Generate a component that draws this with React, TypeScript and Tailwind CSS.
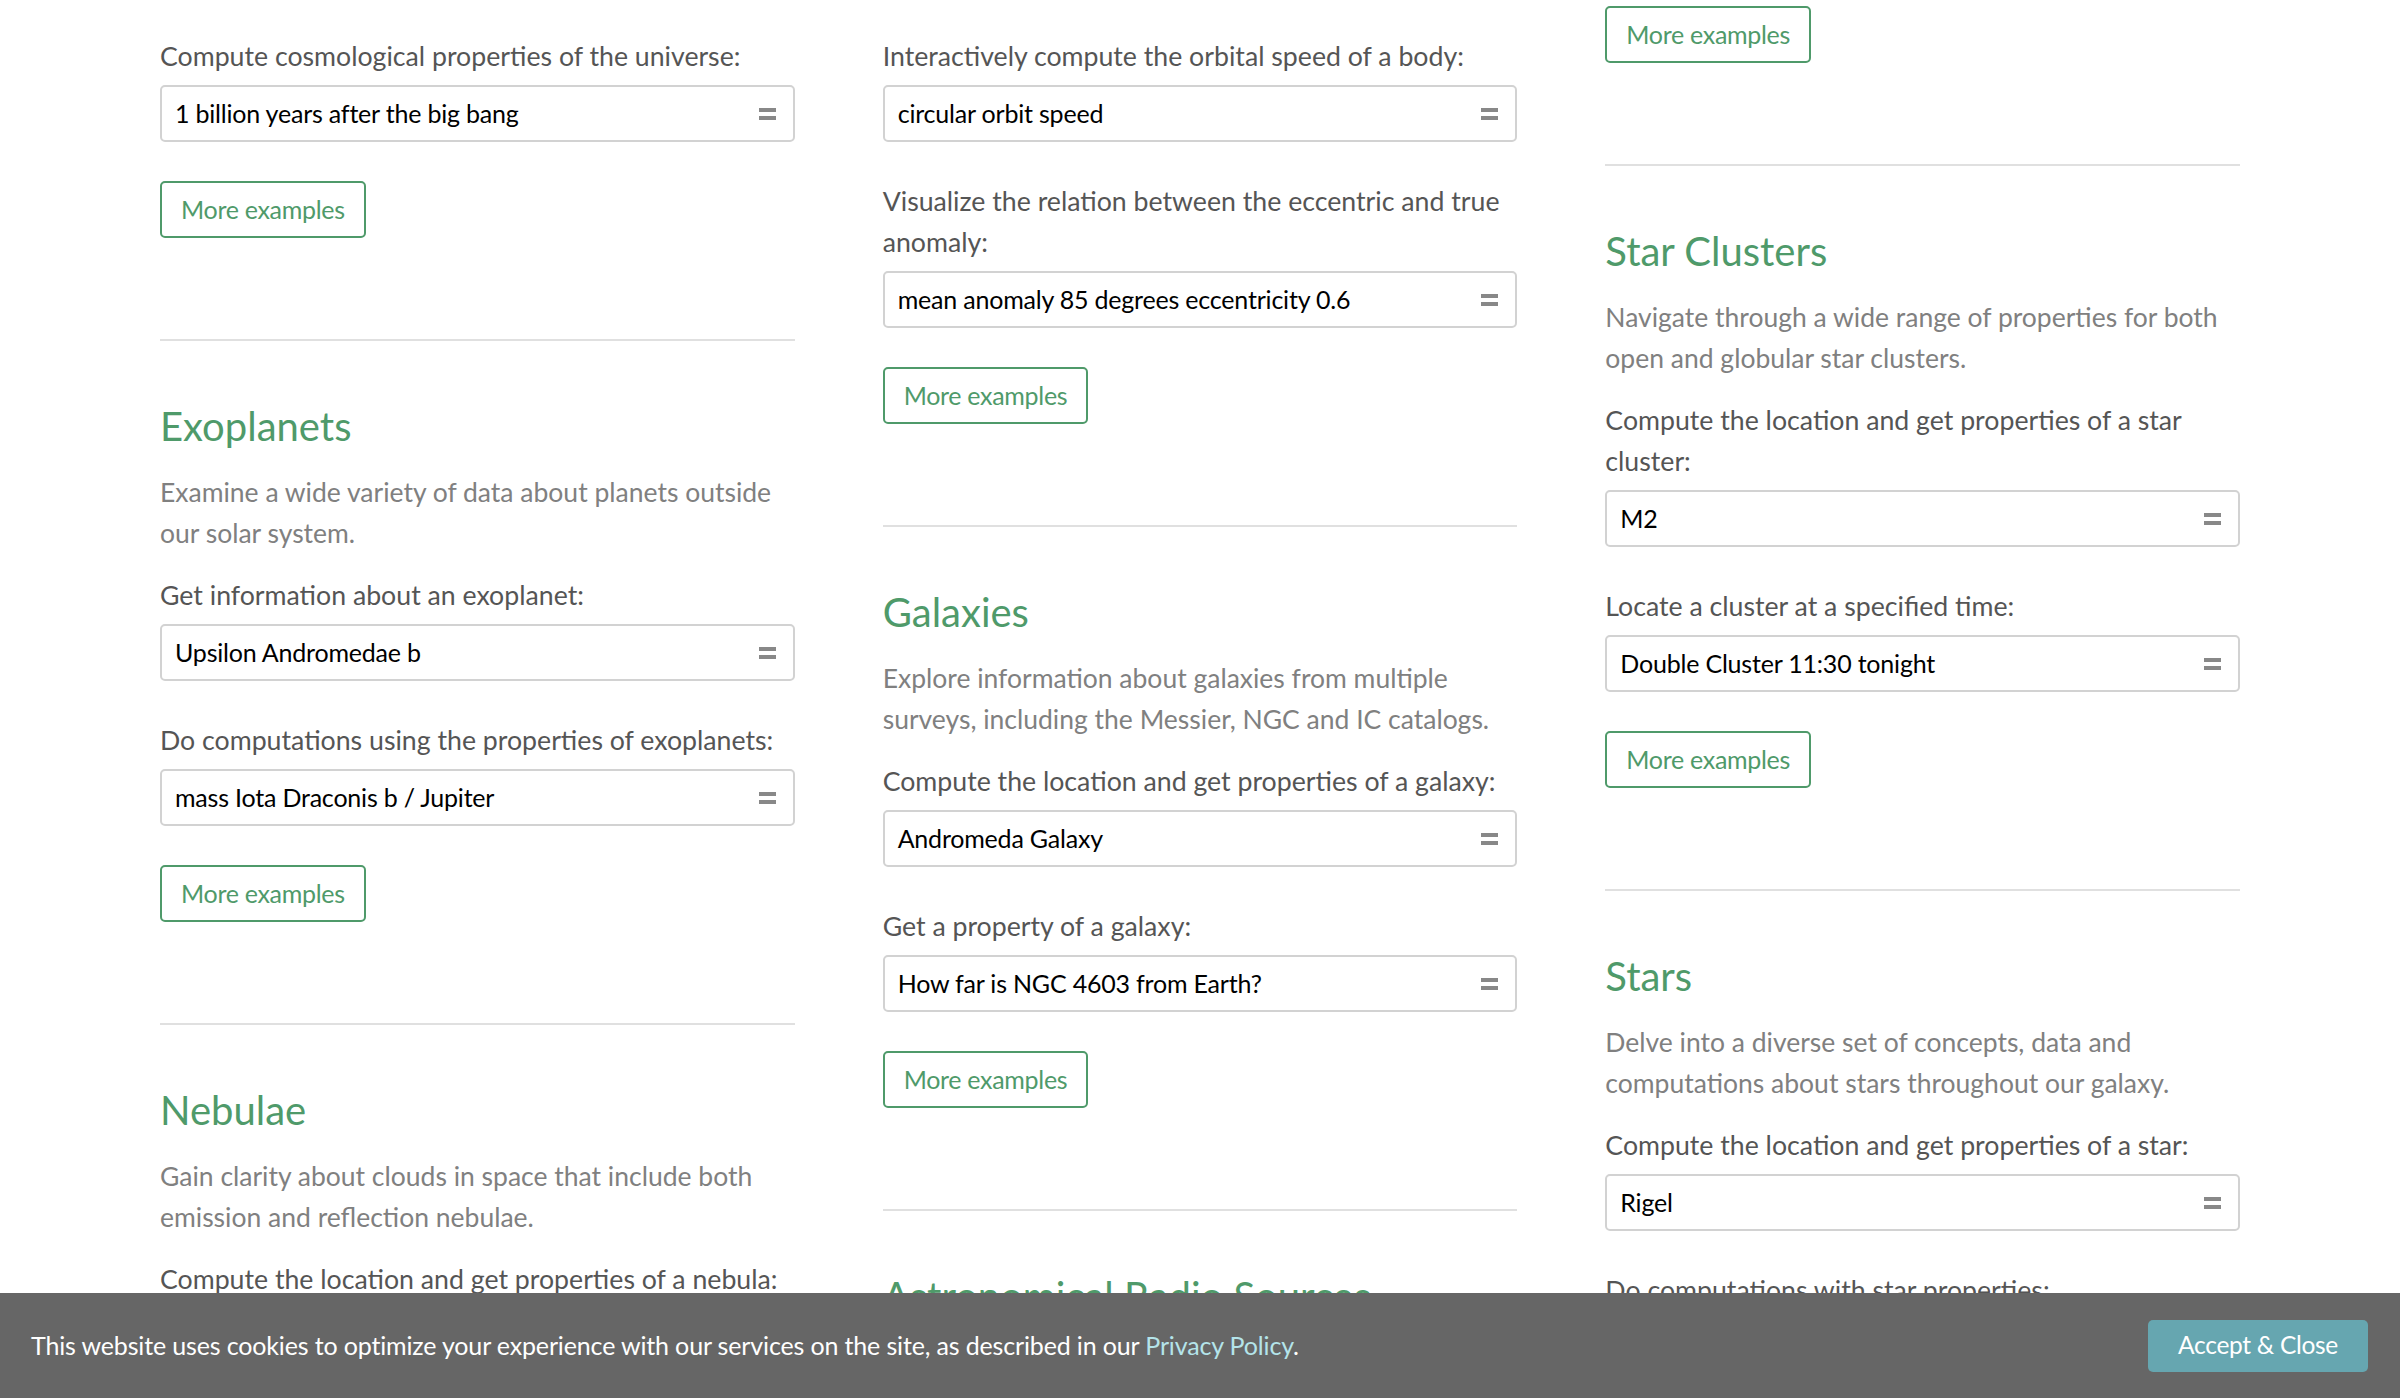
import React from 'react';

type Example = { label: string; value: string };
type Section = { title?: string; description?: string; examples: Example[]; cut?: boolean };

const EqualsIcon: React.FC = () => (
  <div className="flex flex-col gap-[4px]">
    <div className="w-[17px] h-[4px] bg-[#888888]" />
    <div className="w-[17px] h-[4px] bg-[#888888]" />
  </div>
);

const ExampleInput: React.FC<Example> = ({ label, value }) => (
  <div className="mb-[39px]">
    <div className="text-[26.7px] leading-[41px] text-[#555555]">{label}</div>
    <div className="mt-[8px] h-[57px] border-2 border-[#d2d2d2] rounded-[5px] flex items-center justify-between pl-[13px] pr-[17px]">
      <span className="text-[25px] tracking-[-0.2px] text-black">{value}</span>
      <EqualsIcon />
    </div>
  </div>
);

const MoreButton: React.FC = () => (
  <button className="h-[57px] px-[19px] border-2 border-[#4f9a6a] rounded-[5px] text-[25px] tracking-[-0.3px] text-[#4f9a6a] bg-white">
    More examples
  </button>
);

const SectionBlock: React.FC<{ section: Section; first?: boolean }> = ({ section, first }) => (
  <div>
    {!first && <div className="h-[2px] bg-[#e0e0e0] mb-[61px]" />}
    {section.title && (
      <h2 className="text-[40px] leading-[48px] text-[#4f9a6a] mb-[22px]">{section.title}</h2>
    )}
    {section.description && (
      <p className="text-[26.5px] leading-[41px] text-[#808080] mb-[21px]">{section.description}</p>
    )}
    {section.examples.map((ex, i) => (
      <ExampleInput key={i} {...ex} />
    ))}
    {!section.cut && (
      <div className="mb-[101px]">
        <MoreButton />
      </div>
    )}
  </div>
);

const columns: { pt: string; sections: Section[] }[] = [
  {
    pt: 'pt-[36px]',
    sections: [
      {
        examples: [{ label: 'Compute cosmological properties of the universe:', value: '1 billion years after the big bang' }],
      },
      {
        title: 'Exoplanets',
        description: 'Examine a wide variety of data about planets outside our solar system.',
        examples: [
          { label: 'Get information about an exoplanet:', value: 'Upsilon Andromedae b' },
          { label: 'Do computations using the properties of exoplanets:', value: 'mass Iota Draconis b / Jupiter' },
        ],
      },
      {
        title: 'Nebulae',
        description: 'Gain clarity about clouds in space that include both emission and reflection nebulae.',
        examples: [{ label: 'Compute the location and get properties of a nebula:', value: 'Crab Nebula' }],
        cut: true,
      },
    ],
  },
  {
    pt: 'pt-[36px]',
    sections: [
      {
        examples: [
          { label: 'Interactively compute the orbital speed of a body:', value: 'circular orbit speed' },
          { label: 'Visualize the relation between the eccentric and true anomaly:', value: 'mean anomaly 85 degrees eccentricity 0.6' },
        ],
      },
      {
        title: 'Galaxies',
        description: 'Explore information about galaxies from multiple surveys, including the Messier, NGC and IC catalogs.',
        examples: [
          { label: 'Compute the location and get properties of a galaxy:', value: 'Andromeda Galaxy' },
          { label: 'Get a property of a galaxy:', value: 'How far is NGC 4603 from Earth?' },
        ],
      },
      {
        title: 'Astronomical Radio Sources',
        description: 'Find information about radio sources in space.',
        examples: [],
        cut: true,
      },
    ],
  },
  {
    pt: 'pt-[6px]',
    sections: [
      { examples: [] },
      {
        title: 'Star Clusters',
        description: 'Navigate through a wide range of properties for both open and globular star clusters.',
        examples: [
          { label: 'Compute the location and get properties of a star cluster:', value: 'M2' },
          { label: 'Locate a cluster at a specified time:', value: 'Double Cluster 11:30 tonight' },
        ],
      },
      {
        title: 'Stars',
        description: 'Delve into a diverse set of concepts, data and computations about stars throughout our galaxy.',
        examples: [
          { label: 'Compute the location and get properties of a star:', value: 'Rigel' },
          { label: 'Do computations with star properties:', value: 'Sirius radius / Sun radius' },
        ],
        cut: true,
      },
    ],
  },
];

const App: React.FC = () => {
  return (
    <div className="relative h-[1398px] overflow-hidden bg-white" style={{ fontFamily: 'Lato, "Open Sans", sans-serif' }}>
      <div className="grid grid-cols-3 gap-x-[88px] px-[160px]">
        {columns.map((col, ci) => (
          <div key={ci} className={col.pt}>
            {col.sections.map((s, si) => (
              <SectionBlock key={si} section={s} first={si === 0} />
            ))}
          </div>
        ))}
      </div>

      {/* Cookie bar */}
      <div className="fixed bottom-0 left-0 right-0 h-[105px] bg-[#666666] flex items-center justify-between pl-[31px] pr-[32px]">
        <p className="text-[25px] tracking-[-0.15px] text-white">
          This website uses cookies to optimize your experience with our services on the site, as described in our{' '}
          <span className="text-[#b4e4ea]">Privacy Policy</span>.
        </p>
        <button className="h-[52px] px-[30px] rounded-[5px] bg-[#66a6b0] text-[24.5px] tracking-[-0.3px] text-white">Accept &amp; Close</button>
      </div>
    </div>
  );
};

export default App;
